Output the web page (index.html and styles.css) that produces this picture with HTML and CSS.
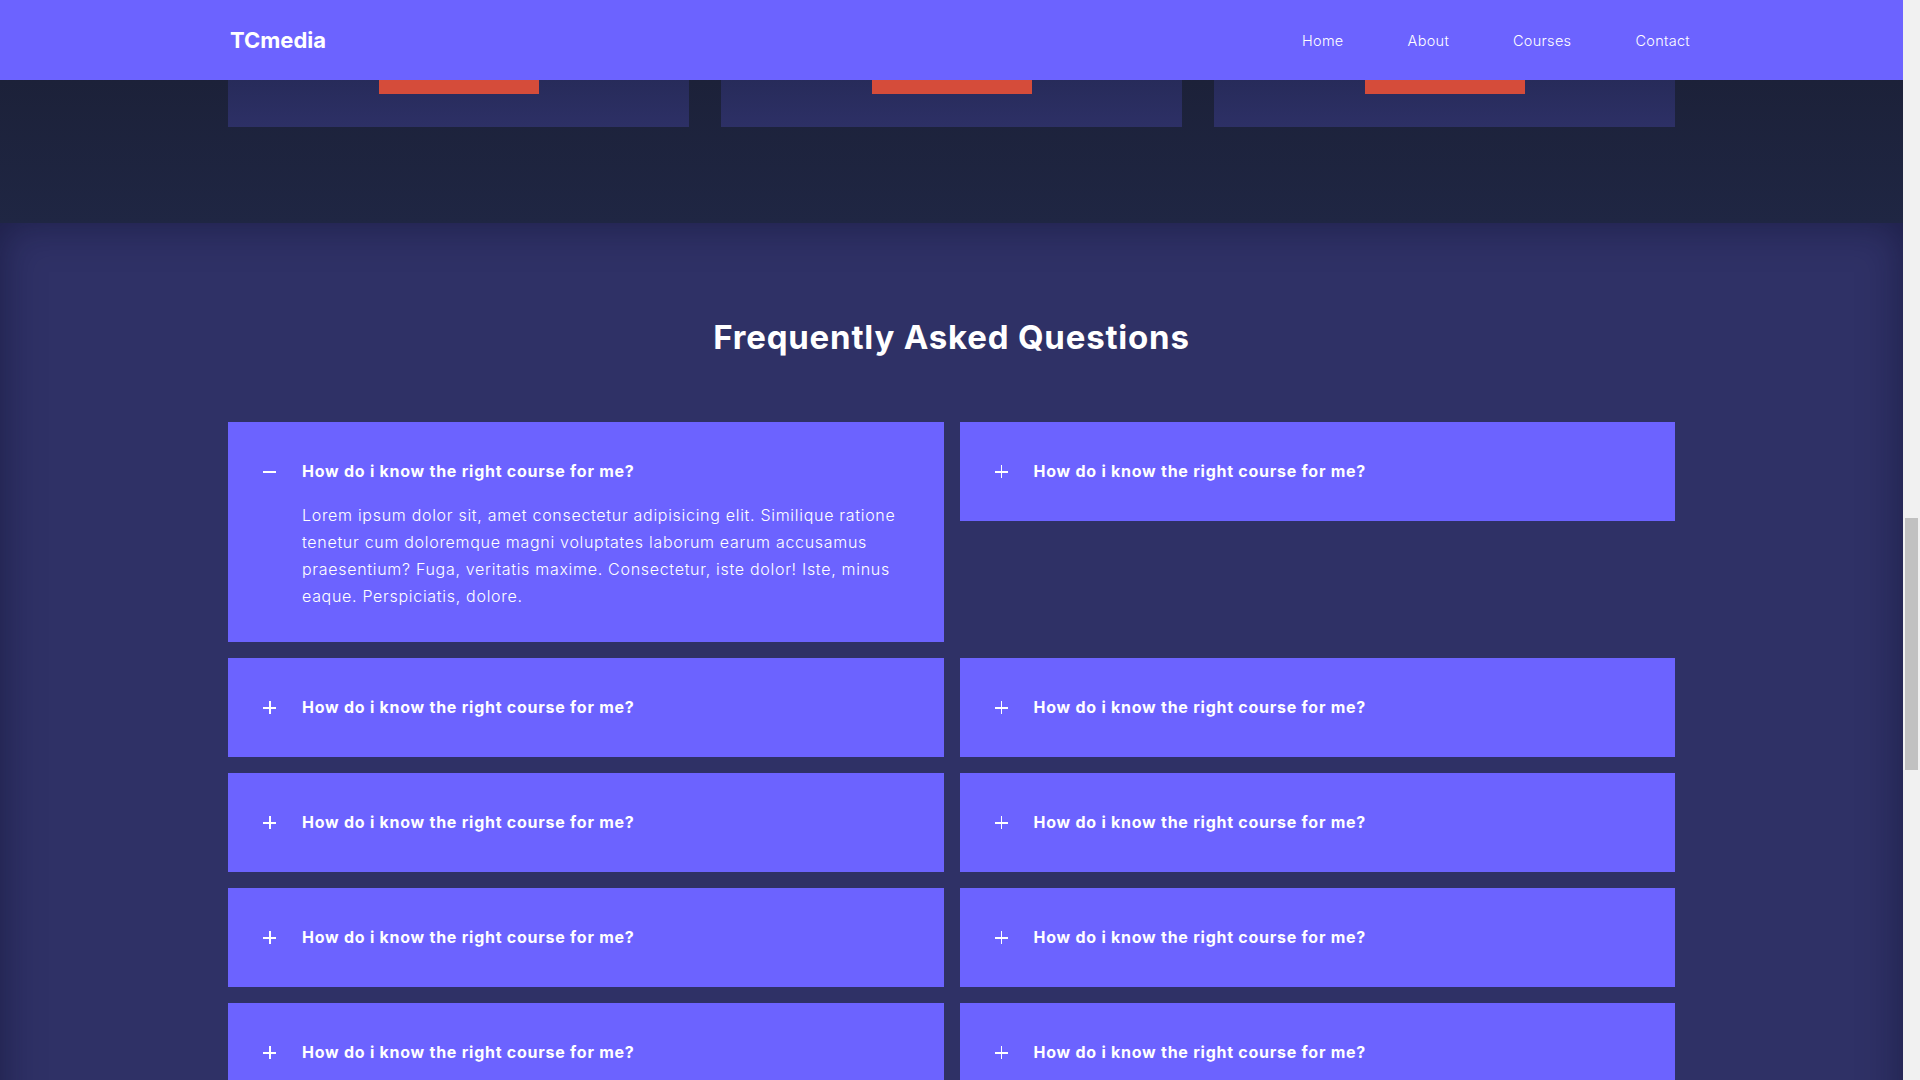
FILE: index.html
```html
<!DOCTYPE html>
<html lang="en">
<head>
<meta charset="utf-8">
<title>TCmedia</title>
<link rel="stylesheet" href="styles.css">
</head>
<body>
<header class="navbar">
  <div class="container nav-inner">
    <a class="logo" href="#">TCmedia</a>
    <ul class="nav-links">
      <li><a href="#">Home</a></li>
      <li><a href="#">About</a></li>
      <li><a href="#">Courses</a></li>
      <li><a href="#">Contact</a></li>
    </ul>
  </div>
</header>

<section class="courses">
  <div class="container course-grid">
    <div class="course-card"><a class="course-btn" href="#"></a></div>
    <div class="course-card"><a class="course-btn" href="#"></a></div>
    <div class="course-card"><a class="course-btn" href="#"></a></div>
  </div>
</section>

<section class="faq">
  <div class="container">
    <h2 class="faq-title">Frequently Asked Questions</h2>
    <div class="faq-grid">
      <div class="faq-item open">
        <div class="faq-q"><span class="icon minus"></span><span>How do i know the right course for me?</span></div>
        <p class="faq-a">Lorem ipsum dolor sit, amet consectetur adipisicing elit. Similique ratione tenetur cum doloremque magni voluptates laborum earum accusamus praesentium? Fuga, veritatis maxime. Consectetur, iste dolor! Iste, minus eaque. Perspiciatis, dolore.</p>
      </div>
      <div class="faq-item">
        <div class="faq-q"><span class="icon plus"></span><span>How do i know the right course for me?</span></div>
      </div>
      <div class="faq-item">
        <div class="faq-q"><span class="icon plus"></span><span>How do i know the right course for me?</span></div>
      </div>
      <div class="faq-item">
        <div class="faq-q"><span class="icon plus"></span><span>How do i know the right course for me?</span></div>
      </div>
      <div class="faq-item">
        <div class="faq-q"><span class="icon plus"></span><span>How do i know the right course for me?</span></div>
      </div>
      <div class="faq-item">
        <div class="faq-q"><span class="icon plus"></span><span>How do i know the right course for me?</span></div>
      </div>
      <div class="faq-item">
        <div class="faq-q"><span class="icon plus"></span><span>How do i know the right course for me?</span></div>
      </div>
      <div class="faq-item">
        <div class="faq-q"><span class="icon plus"></span><span>How do i know the right course for me?</span></div>
      </div>
      <div class="faq-item">
        <div class="faq-q"><span class="icon plus"></span><span>How do i know the right course for me?</span></div>
      </div>
      <div class="faq-item">
        <div class="faq-q"><span class="icon plus"></span><span>How do i know the right course for me?</span></div>
      </div>
    </div>
  </div>
</section>
</body>
</html>
```

FILE: styles.css
```css
* { box-sizing: border-box; margin: 0; padding: 0; }

/* page area is 1903px wide; the right 17px strip mimics the scrollbar track */
html {
  background:
    linear-gradient(#c1c1c1, #c1c1c1) no-repeat right 2px top 518px / 13px 252px,
    linear-gradient(to right, #2f3166 calc(100% - 17px), #f1f1f1 0);
}

body {
  margin-right: 17px;
  font-family: "Inter", "Open Sans", "Liberation Sans", sans-serif;
  color: #ffffff;
}

a { color: inherit; text-decoration: none; }
ul { list-style: none; }

.container {
  width: 1447px;
  margin: 0 auto;
}

/* Navbar */
.navbar {
  background: #6c63ff;
  height: 80px;
}

.nav-inner {
  height: 100%;
  display: flex;
  align-items: center;
  justify-content: space-between;
}

.logo {
  font-size: 22px;
  font-weight: 700;
  letter-spacing: 0;
  padding-left: 2px;
}

.nav-links {
  display: flex;
  gap: 64px;
  margin-right: -15px;
  font-size: 14.5px;
  letter-spacing: 0.3px;
  font-weight: 300;
}

/* Courses (tail visible) */
.courses {
  background: linear-gradient(#1c2139, #1f2643);
  padding-bottom: 96px;
}

.course-grid {
  display: grid;
  grid-template-columns: repeat(3, 1fr);
  gap: 32px;
}

.course-card {
  height: 47px;
  background: linear-gradient(#272b5a, #2d3066);
  display: flex;
  justify-content: center;
}

.course-btn {
  display: block;
  width: 160px;
  height: 14px;
  background: #d54c3a;
}

/* FAQ */
.faq {
  background: #2f3166;
  box-shadow: inset 0 0 40px rgba(10, 12, 40, 0.5);
  padding: 94px 0 80px;
}

.faq-title {
  text-align: center;
  font-size: 33px;
  line-height: 40px;
  font-weight: 700;
  letter-spacing: 0.8px;
  margin-bottom: 65px;
}

.faq-grid {
  display: grid;
  grid-template-columns: 1fr 1fr;
  gap: 16px;
  align-items: start;
}

.faq-item {
  background: #6c63ff;
  padding: 40px 35px;
}

.faq-item.open {
  padding-bottom: 32px;
}

.faq-q {
  display: flex;
  align-items: center;
  font-size: 16px;
  line-height: 19px;
  font-weight: 700;
  letter-spacing: 0.75px;
}

.icon {
  position: relative;
  width: 13px;
  height: 13px;
  margin-right: 26px;
  flex-shrink: 0;
}

.icon::before,
.icon::after {
  content: "";
  position: absolute;
  background: #ffffff;
}

.icon::before {
  left: 0;
  right: 0;
  top: 6px;
  height: 1.5px;
}

.plus::after {
  top: 0;
  bottom: 0;
  left: 6px;
  width: 1.5px;
}

.faq-a {
  margin-top: 21px;
  padding-left: 39px;
  font-size: 16px;
  line-height: 27px;
  font-weight: 300;
  letter-spacing: 0.7px;
}
```
